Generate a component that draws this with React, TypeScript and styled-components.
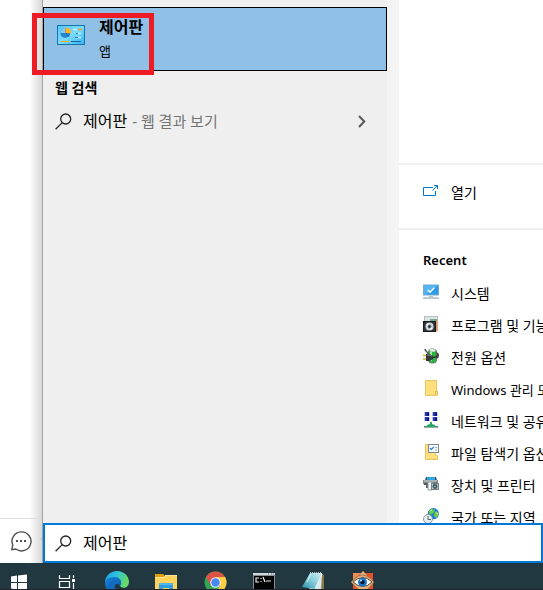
import React from "react";
import styled, { createGlobalStyle } from "styled-components";

const GlobalStyle = createGlobalStyle`
  *, *::before, *::after { box-sizing: border-box; }
  body {
    margin: 0;
    background: #fff;
    color: #000;
    font-family: "Noto Sans", "Noto Sans CJK KR", sans-serif;
    font-size: 14px;
    overflow: hidden;
  }
  button, input { font: inherit; color: inherit; }
  svg { display: block; flex: none; }
`;

const Desktop = styled.div`
  height: 100vh;
  display: flex;
  flex-direction: column;
`;

const Workspace = styled.main`
  flex: 1;
  min-height: 0;
  display: flex;
`;

const PageBehind = styled.aside`
  width: 42px;
  flex: none;
  display: flex;
  flex-direction: column;
  justify-content: flex-end;
  background: linear-gradient(to right, #fff 70%, #d8d8d8);
`;

const CommentBar = styled.div`
  height: 45px;
  display: flex;
  align-items: center;
  gap: 8px;
  padding-left: 10px;
  border-top: 1px solid #dedede;
  color: #c08070;
  font-size: 12px;
  overflow: hidden;
`;

const SearchPanel = styled.section`
  flex: 1;
  min-width: 0;
  display: flex;
  flex-direction: column;
  border-left: 1px solid #a3a3a3;
`;

const Columns = styled.div`
  flex: 1;
  min-height: 0;
  display: flex;
`;

const Results = styled.div`
  flex: 0 0 344px;
  padding-top: 7px;
  background: #efefef;
`;

const Gutter = styled.div`
  flex: 0 0 12px;
  background: #f4f4f4;
`;

const BestMatch = styled.button`
  position: relative;
  display: flex;
  align-items: flex-start;
  gap: 14px;
  width: 100%;
  height: 64px;
  padding: 6px 13px;
  border: 1px solid #000;
  background: #91c0e7;
  text-align: left;
`;

const Highlight = styled.span`
  position: absolute;
  left: -12px;
  top: 5px;
  width: 122px;
  height: 62px;
  border: 5px solid #ed1c24;
`;

const BestText = styled.span`
  display: flex;
  flex-direction: column;
`;

const BestTitle = styled.span`
  font-size: 16px;
  font-weight: 600;
  line-height: 26px;
`;

const BestKind = styled.span`
  font-size: 13px;
  line-height: 22px;
`;

const IconSlot = styled.span`
  padding-top: 11px;
`;

const GroupTitle = styled.h2`
  margin: 0;
  padding: 5px 12px;
  font-size: 14px;
  font-weight: 600;
  line-height: 24px;
`;

const WebResult = styled.button`
  display: flex;
  align-items: center;
  width: 100%;
  height: 32px;
  padding: 0 20px 0 12px;
  border: 0;
  background: none;
  font-size: 16px;
  line-height: 24px;
  white-space: nowrap;
`;

const Query = styled.span`
  margin-left: 11px;
`;

const Hint = styled.span`
  flex: 1;
  margin-left: 5px;
  color: #747474;
  font-size: 15px;
  text-align: left;
`;

const Details = styled.div`
  flex: 1;
  min-width: 0;
  overflow: hidden;
  background: #fff;
  white-space: nowrap;
`;

const Preview = styled.div`
  height: 165px;
  border-bottom: 2px solid #f0f0f0;
`;

const Actions = styled.div`
  height: 65px;
  padding: 10px 24px;
  border-bottom: 2px solid #f0f0f0;
`;

const Recent = styled.div`
  padding: 18px 24px;
`;

const RecentTitle = styled.h3`
  margin: 0 0 4px;
  font-size: 13px;
  font-weight: 600;
  line-height: 24px;
`;

const List = styled.ul`
  margin: 0;
  padding: 0;
  list-style: none;
`;

const Entry = styled.a`
  display: flex;
  align-items: center;
  gap: 12px;
  height: 32px;
  color: #000;
  text-decoration: none;
  line-height: 28px;
`;

const EntryText = styled.span<{ $latin?: boolean }>`
  padding-top: 4px;
  font-size: ${({ $latin }) => ($latin ? "13px" : "14px")};
`;

const SearchBox = styled.label`
  display: flex;
  align-items: center;
  gap: 11px;
  height: 40px;
  padding: 0 10px;
  border: 2px solid #0078d7;
  background: #fff;
`;

const SearchInput = styled.input`
  flex: 1;
  min-width: 0;
  padding: 0 0 2px;
  border: 0;
  outline: 0;
  background: transparent;
  font-size: 16px;
`;

const Taskbar = styled.nav`
  display: flex;
  gap: 25px;
  height: 27px;
  padding: 8px 7px 0;
  background: #223840;
  border-bottom: 1px solid #24242f;
  overflow: hidden;
`;

const TaskButton = styled.button`
  flex: none;
  width: 24px;
  height: 24px;
  padding: 0;
  border: 0;
  background: none;
`;

const Magnifier = () => (
  <svg width="17" height="17" viewBox="0 0 17 17" fill="none" stroke="#222" strokeWidth="1.3">
    <circle cx="10.7" cy="6" r="5" />
    <path d="M7.2 9.6 0.6 16.2" />
  </svg>
);

const ControlPanelIcon = () => (
  <svg width="28" height="20" viewBox="0 0 28 20">
    <defs>
      <linearGradient id="cp" x1="0" y1="0" x2="1" y2="1">
        <stop offset="0" stopColor="#54c6f7" />
        <stop offset=".5" stopColor="#7cdcff" />
        <stop offset="1" stopColor="#36b2ee" />
      </linearGradient>
    </defs>
    <rect x=".5" y=".5" width="27" height="19" fill="url(#cp)" stroke="#1474ad" />
    <circle cx="8.3" cy="8" r="5" fill="#2687d0" />
    <path d="M8.3 8H3.3A5 5 0 0 1 8.3 3Z" fill="#7fcdf3" />
    <path d="M8.5 2.5a5.5 5.5 0 0 1 5.7 5.7H8.5Z" fill="#ffb21e" />
    <path d="M9 8 12 11.500" stroke="#1463a9" />
    <path d="M16 4.5h4M19 8.500h5M18 12.500h6" stroke="#c4efff" strokeWidth="1.6" />
    <path d="M21 4.500h4" stroke="#ed9e31" strokeWidth="1.6" />
    <path d="M19 8.500h2M18 12.500h3" stroke="#167fbd" />
    <path d="M4 16.500h9" stroke="#f1a622" />
    <path d="M14 16.500h10" stroke="#1765a9" />
  </svg>
);

const ChatIcon = () => (
  <svg width="22" height="22" viewBox="0 0 22 22" fill="none" stroke="#505050" strokeWidth="1.4">
    <path d="M2.8 15.2a9.5 9.5 0 1 1 3 3.8l-4 .7Z" />
    <path d="M6 11h2M10 11h2M14 11h2" strokeWidth="2" />
  </svg>
);

const ChevronIcon = () => (
  <svg width="11" height="13" viewBox="0 0 11 13" fill="none" stroke="#5a5a5a" strokeWidth="2">
    <path d="m3 1 5.3 5.5L3 12" />
  </svg>
);

const OpenIcon = () => (
  <svg width="16" height="16" viewBox="0 0 16 16" fill="none" stroke="#0078d7">
    <path d="M10 4.5H.5v8h12V8" />
    <path d="m9.500 7.500 5-5M11 2.500h3.500V6" />
  </svg>
);

const MonitorIcon = () => (
  <svg width="16" height="16" viewBox="0 0 16 16">
    <rect x=".5" y="1" width="15" height="10" fill="#299be8" stroke="#7cabc9" />
    <path d="M1 1.5h14L4 10.5H1Z" fill="#51b6f3" />
    <path d="m4.8 6 2.300 2.200L11.300 3.700" fill="none" stroke="#fff" strokeWidth="1.6" />
    <path d="M6 12h4v1H6z" fill="#b7c7d2" />
    <path d="M1 13h14l1 2H0z" fill="#8da4b2" />
    <path d="M1 14h14" stroke="#e5edf1" />
  </svg>
);

const ProgramsIcon = () => (
  <svg width="16" height="16" viewBox="0 0 16 16">
    <path d="M1 0h14v5H1z" fill="#b5bec0" />
    <path d="M2 1h12v4H2z" fill="#dce4e6" />
    <path d="M7 3h7v3H7z" fill="#6fae86" />
    <path d="M12 5h3v10.500h-3z" fill="#e0a07c" />
    <rect x=".5" y="5.500" width="12" height="10" fill="#303438" stroke="#17191c" />
    <circle cx="6.5" cy="10.500" r="4" fill="#cfd6da" />
    <path d="m4 8 5 5" stroke="#fff" strokeWidth="1.4" />
    <circle cx="6.5" cy="10.500" r="1.900" fill="#6d777d" />
    <circle cx="6.5" cy="10.500" r=".9" fill="#101418" />
  </svg>
);

const PowerIcon = () => (
  <svg width="16" height="16" viewBox="0 0 16 16">
    <rect x="5.5" y="1" width="8" height="14" rx="3" fill="#2cb440" stroke="#667b6c" />
    <ellipse cx="9.5" cy="2.2" rx="3" ry="1.5" fill="#e0e8e1" />
    <path d="M8 4v9" stroke="#a3f3a0" strokeWidth="2" />
    <path d="M2 1c0 3 3 2 3 5M13 10c3 0 3-5 0-5" fill="none" stroke="#454b49" strokeWidth="1.4" />
    <path d="M0 7.5h4M0 11h4" stroke="#d3b735" strokeWidth="1.6" />
    <path d="M3 6h4l3 2v3l-3 2H3z" fill="#353b3c" />
    <path d="M4 7h3l2 1" fill="none" stroke="#879197" />
    <path d="M10 9.500c2 0 4-1 5-3" fill="none" stroke="#333" strokeWidth="1.500" />
  </svg>
);

const FolderIcon = () => (
  <svg width="16" height="16" viewBox="0 0 16 16">
    <path d="M2.5.5h11v11h1v4h-12z" fill="#ffe07c" stroke="#e8c45d" />
    <path d="M12.5 15v-3.500h2v4" fill="#ffe99f" stroke="#e0b84b" />
  </svg>
);

const NetworkIcon = () => (
  <svg width="16" height="16" viewBox="0 0 16 16">
    {[[1, 0], [9, 0], [1, 5], [9, 5]].map(([x, y]) => (
      <g key={`${x}-${y}`}>
        <rect x={x} y={y} width="6" height="4" fill="#c3c8e2" />
        <rect x={x + 1} y={y} width="4" height="4" fill="#2935b6" />
        <path d={`M${x + 3} ${y + 1}h2v3h-2z`} fill="#121976" />
      </g>
    ))}
    <path d="M7 10h2v2l3 1v1h3v1H1v-1h3v-1l3-1z" fill="#28a567" />
    <path d="M1 15.5h14" stroke="#9aaaa5" />
  </svg>
);

const FileOptionsIcon = () => (
  <svg width="16" height="16" viewBox="0 0 16 16">
    <path d="M2.5.5h10v11h2v4h-12z" fill="#ffe07c" stroke="#e8c45d" />
    <rect x="5.5" y=".5" width="10" height="8" fill="#f7fbff" stroke="#7e8990" />
    <path d="m7 4 1.4 1.5L10.8 3" fill="none" stroke="#2488d1" strokeWidth="1.2" />
    <path d="M12 3.5h2M12 6h2" stroke="#9cabb2" />
  </svg>
);

const DevicesIcon = () => (
  <svg width="16" height="16" viewBox="0 0 16 16">
    <path d="M3 1h10l1 3H2z" fill="#47565c" />
    <path d="M4 1h8v3H4z" fill="#2ba7e6" />
    <path d="M0 4h15v4H0z" fill="#7f8a8e" />
    <path d="M1 5h13" stroke="#d3dadd" />
    <path d="M1 7h4v5H3V9H1z" fill="#525d62" />
    <path d="M5 6h4v8H5z" fill="#f4f7f8" stroke="#949da2" />
    <rect x="8.5" y="7.5" width="7" height="6" fill="#bcc4c8" stroke="#747f84" />
    <path d="M10 6h4v2h-4z" fill="#707b80" />
    <circle cx="12" cy="10.5" r="2.4" fill="#465057" />
    <circle cx="12" cy="10.5" r="1" fill="#5cbbdf" />
  </svg>
);

const RegionIcon = () => (
  <svg width="16" height="16" viewBox="0 0 16 16">
    <circle cx="10.300" cy="5.700" r="5.600" fill="#1677d9" />
    <path d="M6 2.4 9 .7l3 1-1 3-3 2-2-1zM13 3l2 1 .500 3-2 3-3-2 1-3z" fill="#67c951" />
    <path d="M7 3l2-1M13 5l2 1" stroke="#c5f19c" />
    <circle cx="5" cy="11" r="4.5" fill="#e9eef0" stroke="#8b979c" />
    <path d="M5 8v3.500h3" fill="none" stroke="#55656c" />
  </svg>
);

const WindowsIcon = () => (
  <svg width="24" height="24" viewBox="0 0 24 24" fill="#fff">
    <path d="m4 5.500 6-1V11H4zM11 4.500l9-1V11h-9zM4 12h6v6.500l-6-1zM11 12h9v8l-9-1z" />
  </svg>
);

const TaskViewIcon = () => (
  <svg width="24" height="24" viewBox="0 0 24 24" fill="none" stroke="#fff">
    <path d="M3.5 4v3.500h10V4M3.500 20v-.500h10v.500M3.500 10.500h10v6h-10zM17.500 4v3M17.500 12v8" strokeWidth="1.2" />
    <path d="M16 8h3v3h-3z" fill="#fff" stroke="none" />
  </svg>
);

const EdgeIcon = () => (
  <svg width="24" height="24" viewBox="0 0 24 24">
    <defs>
      <linearGradient id="edgeTop" x1="0" y1="0" x2="1" y2=".3">
        <stop offset="0" stopColor="#1b9de2" />
        <stop offset=".5" stopColor="#2bc4dc" />
        <stop offset="1" stopColor="#65dc65" />
      </linearGradient>
      <linearGradient id="edgeLow" x1="0" y1="0" x2="1" y2="1">
        <stop offset="0" stopColor="#1683d5" />
        <stop offset="1" stopColor="#0c4b9d" />
      </linearGradient>
    </defs>
    <path d="M0 12C0 5 5 0 12 0s12 5 12 11c0 5-5 7-8 5-2-1 0-2 0-4 0-3-3-5-7-5-5 0-9 3-9 5Z" fill="url(#edgeTop)" />
    <path d="M0 12c0-4 5-6 10-6 4 0 6 3 6 6 0 1-1 2-1 3-1-2-4-3-5 0-1 3 3 6 7 6l5-2c-3 5-8 6-12 5-5-1-10-6-10-12Z" fill="url(#edgeLow)" />
    <path d="M12 10c-4 0-6 4-5 8 1 3 3 5 5 6-5-1-9-5-9-9 1-4 5-6 9-5Z" fill="#126abc" />
  </svg>
);

const ExplorerIcon = () => (
  <svg width="24" height="24" viewBox="0 0 24 24">
    <path d="M1 3h8l1 1v3H1z" fill="#dda008" />
    <path d="M1 6h9l1-2h12v18H1z" fill="#ffd35c" />
    <path d="M1 6.500h9l1-2h12" fill="none" stroke="#ffe491" />
    <path d="M5 22v-9h14v9h-4v-5H9v5z" fill="#329ddd" />
    <path d="M5 12h14v2H5z" fill="#52b5ed" />
  </svg>
);

const ChromeIcon = () => (
  <svg width="24" height="24" viewBox="0 0 24 24">
    <circle cx="12.5" cy="11.5" r="11" fill="#34a353" />
    <path d="M12.5 11.5 3 6a11 11 0 0 1 19 0Z" fill="#de5246" />
    <path d="M12.5 6H22a11 11 0 0 1-9.700 16.500l5-8.200Z" fill="#ffce44" />
    <path d="m3 6 4.800 8.200L12.500 6z" fill="#de5246" />
    <circle cx="12.5" cy="11.5" r="5.200" fill="#f1f3f5" />
    <circle cx="12.5" cy="11.5" r="4.200" fill="#4688f4" />
  </svg>
);

const TerminalIcon = () => (
  <svg width="24" height="24" viewBox="0 0 24 24">
    <path d="M1 2h22v20H1z" fill="#858c91" />
    <path d="M1 2h22v2H1z" fill="#d0d6d9" />
    <path d="M16 3h1M19 3h1M21 3h1" stroke="#637078" />
    <path d="M2 5h20v16H2z" fill="#050505" />
    <path d="M7 7H4v4h3M9 7v1M9 10v1M11 6l2 5M14 10h5" fill="none" stroke="#eee" strokeWidth="1.2" />
  </svg>
);

const NotepadIcon = () => (
  <svg width="24" height="24" viewBox="0 0 24 24">
    <defs>
      <linearGradient id="note" x1="0" y1="1" x2="1" y2="0">
        <stop offset="0" stopColor="#258ea8" />
        <stop offset=".55" stopColor="#8bd0de" />
        <stop offset="1" stopColor="#d3edf1" />
      </linearGradient>
    </defs>
    <path d="m20 2 3 2v18h-5z" fill="#8a744e" />
    <path d="M10 2h11l-1 20H8z" fill="#d9e9e9" />
    <path d="M9 2h12l-7 16-13-2z" fill="url(#note)" />
    <path d="m10 3-4 8M21 3l-7 15v4" fill="none" stroke="#e6f3f3" />
    <path d="M9 1.500h12" stroke="#afbdbd" strokeDasharray="1 1" />
  </svg>
);

const EyeIcon = () => (
  <svg width="24" height="24" viewBox="0 0 24 24">
    <path d="M3 2h20v20H3z" fill="#e75026" />
    <path d="M3 2h10v11H3z" fill="#f78b55" />
    <path d="M13 0 18 5l6 6-5 6-6 5-6-5-6-6 7-6z" fill="#e2b17e" stroke="#8f6843" strokeWidth=".7" />
    <path d="M3 11q10-9 19 0-9 9-19 0Z" fill="#fff" stroke="#60442b" />
    <circle cx="12.5" cy="11.2" r="4.4" fill="#1775cb" />
    <circle cx="12.5" cy="11.2" r="2.1" fill="#07192e" />
    <circle cx="11" cy="9.5" r="1" fill="#c9edff" />
    <path d="M5 7q7-6 15 0" fill="none" stroke="#a97345" />
  </svg>
);

const recentItems = [
  { label: "시스템", Icon: MonitorIcon },
  { label: "프로그램 및 기능", Icon: ProgramsIcon },
  { label: "전원 옵션", Icon: PowerIcon },
  { label: "Windows 관리 도구", Icon: FolderIcon, latin: true },
  { label: "네트워크 및 공유 센터", Icon: NetworkIcon },
  { label: "파일 탐색기 옵션", Icon: FileOptionsIcon },
  { label: "장치 및 프린터", Icon: DevicesIcon },
  { label: "국가 또는 지역", Icon: RegionIcon },
];

const taskbarItems = [
  { label: "시작", Icon: WindowsIcon },
  { label: "작업 보기", Icon: TaskViewIcon },
  { label: "Microsoft Edge", Icon: EdgeIcon },
  { label: "파일 탐색기", Icon: ExplorerIcon },
  { label: "Chrome", Icon: ChromeIcon },
  { label: "명령 프롬프트", Icon: TerminalIcon },
  { label: "메모장", Icon: NotepadIcon },
  { label: "이미지 뷰어", Icon: EyeIcon },
];

export default function App() {
  return (
    <Desktop>
      <GlobalStyle />
      <Workspace>
        <PageBehind>
          <CommentBar>
            <ChatIcon />
            <span>1</span>
          </CommentBar>
        </PageBehind>
        <SearchPanel>
          <Columns>
            <Results>
              <BestMatch type="button">
                <IconSlot>
                  <ControlPanelIcon />
                </IconSlot>
                <BestText>
                  <BestTitle>제어판</BestTitle>
                  <BestKind>앱</BestKind>
                </BestText>
                <Highlight />
              </BestMatch>
              <GroupTitle>웹 검색</GroupTitle>
              <WebResult type="button">
                <Magnifier />
                <Query>제어판</Query>
                <Hint>- 웹 결과 보기</Hint>
                <ChevronIcon />
              </WebResult>
            </Results>
            <Gutter />
            <Details>
              <Preview />
              <Actions>
                <Entry href="#open">
                  <OpenIcon />
                  <EntryText>열기</EntryText>
                </Entry>
              </Actions>
              <Recent>
                <RecentTitle>Recent</RecentTitle>
                <List>
                  {recentItems.map(({ label, Icon, latin }) => (
                    <li key={label}>
                      <Entry href="#recent">
                        <Icon />
                        <EntryText $latin={latin}>{label}</EntryText>
                      </Entry>
                    </li>
                  ))}
                </List>
              </Recent>
            </Details>
          </Columns>
          <SearchBox>
            <Magnifier />
            <SearchInput type="text" defaultValue="제어판" aria-label="검색" />
          </SearchBox>
        </SearchPanel>
      </Workspace>
      <Taskbar>
        {taskbarItems.map(({ label, Icon }) => (
          <TaskButton key={label} type="button" aria-label={label}>
            <Icon />
          </TaskButton>
        ))}
      </Taskbar>
    </Desktop>
  );
}
